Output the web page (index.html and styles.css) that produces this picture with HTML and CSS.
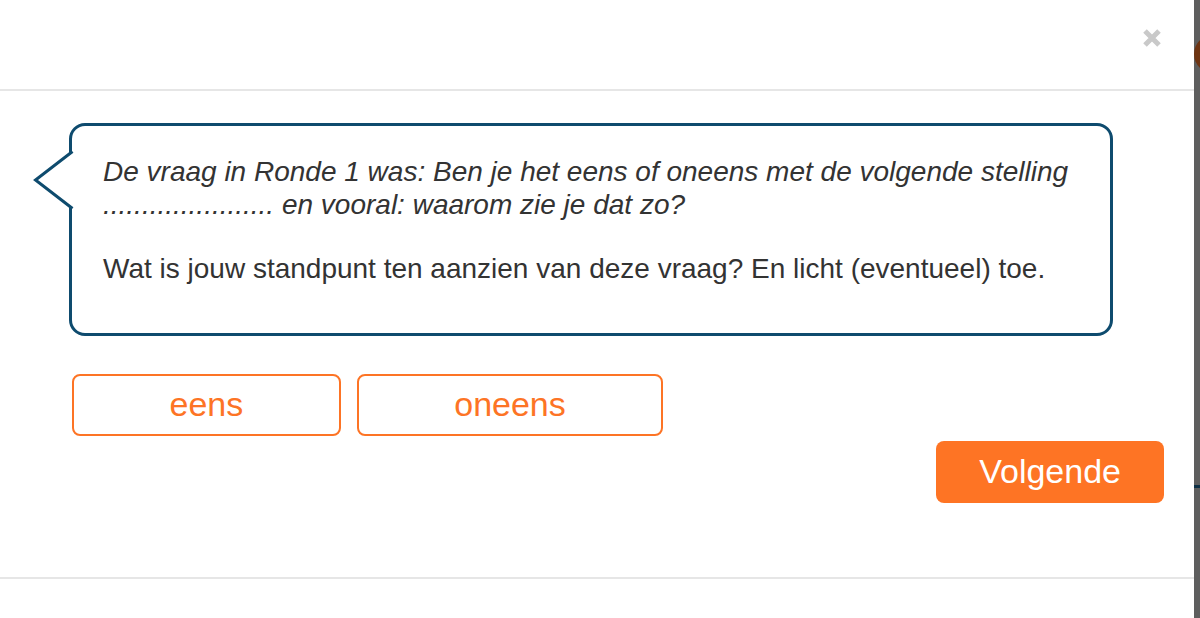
FILE: index.html
```html
<!DOCTYPE html>
<html lang="nl">
<head>
    <meta charset="UTF-8">
    <meta name="viewport" content="width=device-width, initial-scale=1.0">
    <title>Ronde 2</title>
    <link rel="stylesheet" href="styles.css">
</head>
<body>
    <div class="screen">
        <div class="modal">
            <div class="modal-header">
                <button class="close" aria-label="Sluiten">
                    <svg width="20" height="20" viewBox="0 0 20 20">
                        <path d="M3 3 L17 17 M17 3 L3 17" stroke="#c9c9c9" stroke-width="5" fill="none"/>
                    </svg>
                </button>
            </div>
            <div class="modal-body">
                <div class="bubble">
                    <svg class="bubble-tail" width="44" height="66" viewBox="0 0 44 66">
                        <path d="M44 6 L41 6 L4 33 L41 60 L44 60 Z" fill="#fff"/>
                        <path d="M41.5 4.5 L4.5 33 L41.5 61.5" stroke="#0e4b6e" stroke-width="3" fill="none"/>
                    </svg>
                    <p class="question"><em>De vraag in Ronde 1 was: Ben je het eens of oneens met de volgende stelling ...................... en vooral: waarom zie je dat zo?</em></p>
                    <p>Wat is jouw standpunt ten aanzien van deze vraag? En licht (eventueel) toe.</p>
                </div>
                <div class="choices">
                    <button class="choice">eens</button>
                    <button class="choice">oneens</button>
                </div>
                <div class="actions">
                    <button class="next">Volgende</button>
                </div>
            </div>
            <div class="modal-footer"></div>
        </div>
        <div class="backdrop">
            <span class="backdrop-dot"></span>
            <span class="backdrop-line"></span>
        </div>
    </div>
</body>
</html>
```

FILE: styles.css
```css
body {
    margin: 0;
    font-family: 'Liberation Sans', Arial, Helvetica, sans-serif;
    color: #333;
    background-color: #5e5e5e;
}
.screen {
    display: flex;
    height: 618px;
    overflow: hidden;
}
.modal {
    width: 1194px;
    background-color: #fff;
    display: flex;
    flex-direction: column;
}
.modal-header {
    height: 91px;
    border-bottom: 2px solid #e6e6e6;
    display: flex;
    justify-content: flex-end;
    align-items: flex-start;
    padding: 28px 32px 0 0;
    box-sizing: border-box;
}
.close {
    background: none;
    border: none;
    padding: 0;
    width: 20px;
    height: 20px;
    cursor: pointer;
}
.close svg {
    display: block;
}
.modal-body {
    padding: 32px 30px 74px 69px;
}
.bubble {
    position: relative;
    margin-right: 51px;
    border: 3px solid #0e4b6e;
    border-radius: 16px;
    padding: 30px 29px 47px 31px;
    font-size: 28px;
    line-height: 32.5px;
}
.bubble p {
    margin: 0;
}
.bubble p + p {
    margin-top: 32px;
}
.bubble-tail {
    position: absolute;
    left: -41px;
    top: 21px;
}
.choices {
    display: flex;
    gap: 16px;
    margin: 38px 0 0 3px;
}
.choice {
    height: 62px;
    padding: 0 95.5px;
    border: 2px solid #fd7425;
    border-radius: 8px;
    background-color: #fff;
    color: #fd7425;
    font-family: inherit;
    font-size: 34px;
    cursor: pointer;
}
.actions {
    display: flex;
    justify-content: flex-end;
    margin-top: 5px;
}
.next {
    height: 62px;
    padding: 0 43px;
    border: none;
    border-radius: 8px;
    background-color: #fe7424;
    color: #fff;
    font-family: inherit;
    font-size: 34px;
    cursor: pointer;
}
.modal-footer {
    flex: 1;
    border-top: 2px solid #e6e6e6;
}
.backdrop {
    position: relative;
    flex: 1;
    background-color: #5e5e5e;
}
.backdrop-dot {
    position: absolute;
    left: 0;
    top: 35px;
    width: 38px;
    height: 38px;
    border-radius: 50%;
    background-color: #6e3412;
}
.backdrop-line {
    position: absolute;
    left: 0;
    right: 0;
    top: 485px;
    height: 3px;
    background-color: #0d2f45;
}
```
